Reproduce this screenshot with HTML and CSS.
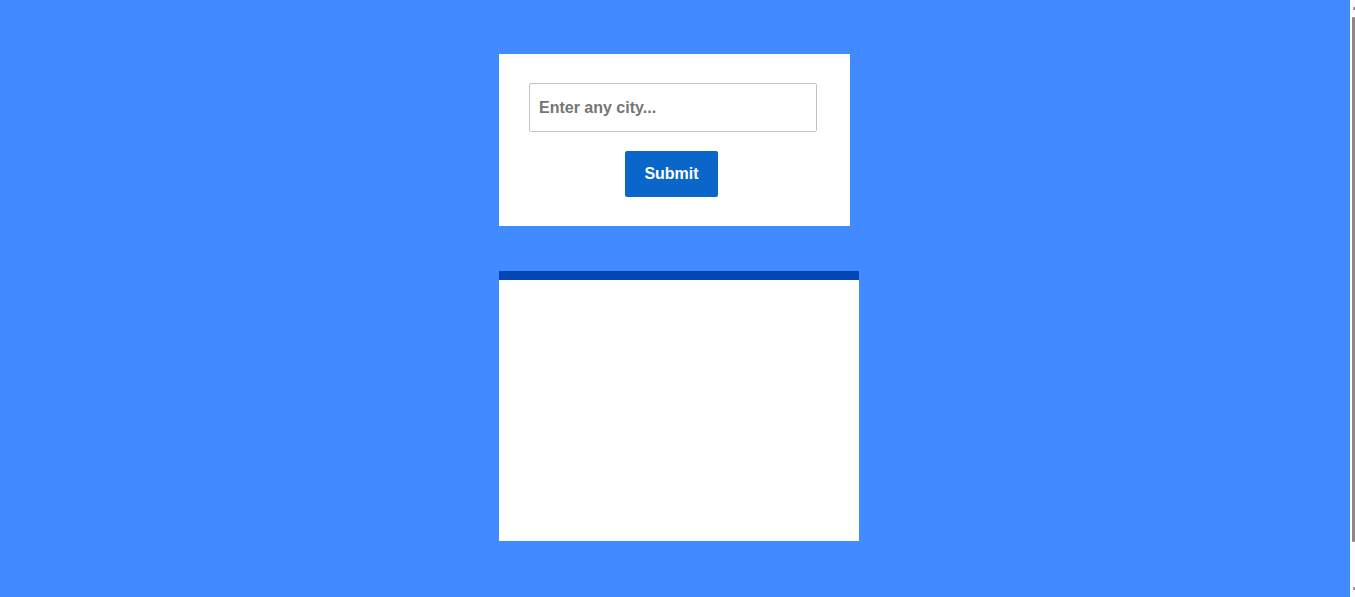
FILE: index.html
```html
<!DOCTYPE html>
<html lang="en">
<head>
<meta charset="utf-8">
<title>Weather</title>
<link rel="stylesheet" href="styles.css">
</head>
<body>
<main class="wrap">
  <form class="search-card">
    <input class="city-input" type="text" placeholder="Enter any city...">
    <button class="submit-btn" type="button">Submit</button>
  </form>
  <section class="result-card"></section>
</main>
<div class="fake-scrollbar" aria-hidden="true">
  <div class="fake-arrow fake-arrow-up"></div>
  <div class="fake-thumb"></div>
  <div class="fake-arrow fake-arrow-down"></div>
</div>
</body>
</html>
```
FILE: styles.css
```css
html {
  background: #428aff;
}
body {
  margin: 0;
  padding: 54px 0 56px;
  background: #428aff;
  font-family: "Liberation Sans", Arial, sans-serif;
}
.wrap {
  width: 351px;
  margin: 0 auto;
  position: relative;
  left: -3px;
}
.search-card {
  background: #ffffff;
  padding: 29px 30px 29px 30px;
  display: flex;
  flex-direction: column;
  align-items: center;
  gap: 19px;
  margin: 0;
}
.city-input {
  box-sizing: border-box;
  width: 288px;
  height: 49px;
  border: 1px solid #c2c2c2;
  border-radius: 2px;
  padding: 0 9px;
  font-family: "Liberation Sans", Arial, sans-serif;
  font-size: 16px;
  font-weight: bold;
  color: #333;
  outline: none;
  margin-left: -3px;
}
.city-input::placeholder {
  color: #757575;
}
.submit-btn {
  box-sizing: border-box;
  width: 93px;
  height: 46px;
  background: #0a66c8;
  color: #ffffff;
  border: none;
  border-radius: 2px;
  font-family: "Liberation Sans", Arial, sans-serif;
  font-size: 16px;
  font-weight: bold;
  margin-left: -6px;
}
.result-card {
  margin-top: 45px;
  width: 360px;
  height: 261px;
  background: #ffffff;
  border-top: 9px solid #0447b4;
}
.fake-scrollbar {
  position: fixed;
  top: 0;
  right: 0;
  bottom: 0;
  width: 5px;
  background: #ffffff;
}
.fake-thumb {
  position: absolute;
  top: 17px;
  bottom: 55px;
  left: 2px;
  width: 3px;
  border-radius: 1px;
  background: #8a8a8a;
}
.fake-arrow {
  position: absolute;
  left: 3px;
  width: 2px;
  height: 3px;
  background: #9a9a9a;
}
.fake-arrow-up {
  top: 7px;
}
.fake-arrow-down {
  bottom: 7px;
}
```
